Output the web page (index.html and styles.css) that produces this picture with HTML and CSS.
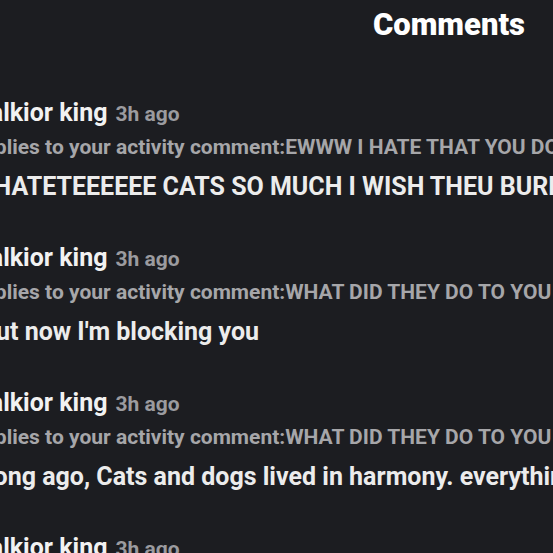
FILE: index.html
```html
<!DOCTYPE html>
<html>
<head>
<meta charset="utf-8">
<link rel="stylesheet" href="styles.css">
</head>
<body>
<div class="page">
  <header class="header"><h1 class="title">Comments</h1></header>
  <div class="list">
    <div class="item">
      <div class="meta"><span class="name">Valkior king</span><span class="time">3h ago</span></div>
      <div class="reply">replies to your activity comment:EWWW I HATE THAT YOU DO THAT</div>
      <div class="body">I HATETEEEEEE CATS SO MUCH I WISH THEU BURN</div>
    </div>
    <div class="item">
      <div class="meta"><span class="name">Valkior king</span><span class="time">3h ago</span></div>
      <div class="reply">replies to your activity comment:WHAT DID THEY DO TO YOU</div>
      <div class="body">But now I'm blocking you</div>
    </div>
    <div class="item">
      <div class="meta"><span class="name">Valkior king</span><span class="time">3h ago</span></div>
      <div class="reply">replies to your activity comment:WHAT DID THEY DO TO YOU</div>
      <div class="body">Long ago, Cats and dogs lived in harmony. everything changed</div>
    </div>
    <div class="item">
      <div class="meta"><span class="name">Valkior king</span><span class="time">3h ago</span></div>
      <div class="reply">replies to your activity comment:WHAT DID THEY DO TO YOU</div>
      <div class="body">Then</div>
    </div>
  </div>
</div>
</body>
</html>
```
FILE: styles.css
```css
html, body {
  margin: 0;
  padding: 0;
  background: #1c1d21;
  overflow: hidden;
}
.page {
  width: 553px;
  height: 553px;
  overflow: hidden;
  font-family: Roboto, "Liberation Sans", sans-serif;
}
.header {
  display: flex;
  justify-content: flex-end;
  padding: 6px 28px 0 0;
  height: 94px;
  box-sizing: border-box;
}
.title {
  margin: 0;
  font-size: 31px;
  font-weight: 900;
  color: #ffffff;
  line-height: 38px;
}
.list {
  display: flex;
  flex-direction: column;
}
.item {
  height: 145px;
  white-space: nowrap;
}
.meta {
  display: flex;
  align-items: baseline;
  gap: 8px;
  line-height: 38px;
  margin-left: -26px;
}
.name {
  font-size: 25px;
  font-weight: 700;
  color: #f2f2f2;
}
.time {
  font-size: 21px;
  font-weight: 700;
  color: #9b9b9f;
}
.reply {
  font-size: 21px;
  font-weight: 700;
  color: #a6a6a9;
  line-height: 28px;
  margin-left: -24px;
}
.body {
  font-size: 25px;
  font-weight: 700;
  color: #ececec;
  line-height: 36px;
  padding-top: 8px;
  margin-left: -20px;
}
```
